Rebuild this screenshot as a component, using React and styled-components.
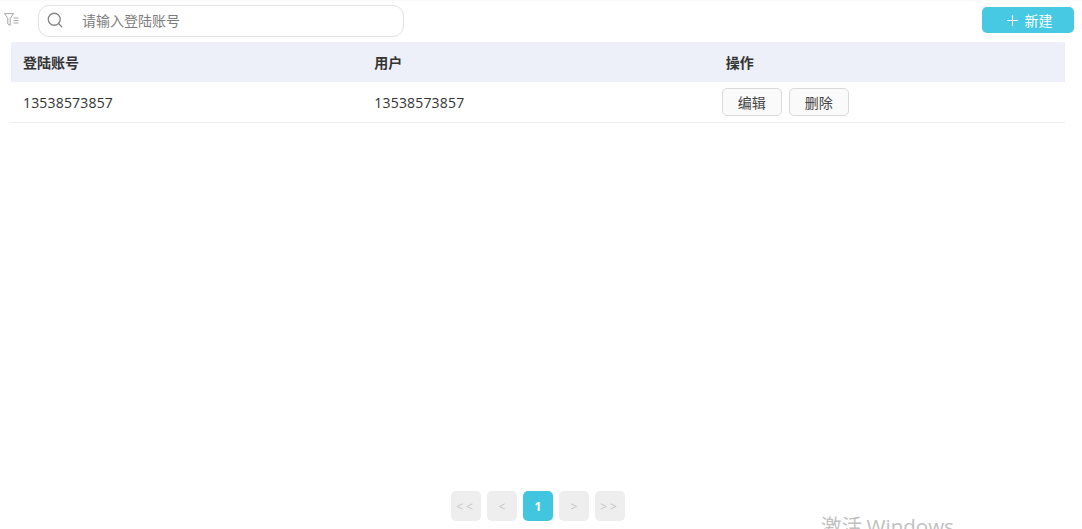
import React from "react";
import styled, { createGlobalStyle } from "styled-components";
import { Search, Plus } from "lucide-react";

const Global = createGlobalStyle`
  html, body { margin: 0; padding: 0; background: #fff; height: 100%; overflow: hidden; }
  body { font-family: "Open Sans", "Noto Sans CJK SC", sans-serif; color: #333; }
  #root { height: 100%; }
`;

const Page = styled.div`
  position: relative;
  height: 529px;
  display: flex;
  flex-direction: column;
  overflow: hidden;
  border-top: 1px solid #fafafa;
  box-sizing: border-box;
`;

const Toolbar = styled.div`
  height: 41px;
  flex: none;
  display: flex;
  align-items: center;
  padding: 0 8px 0 4px;
`;

const FilterIcon = styled.svg`
  width: 15px;
  height: 13px;
  flex: none;
  margin: -4px 19px 0 0;
  color: #a6a6a6;
`;

const SearchBox = styled.label`
  width: 366px;
  height: 32px;
  box-sizing: border-box;
  margin-top: -1px;
  display: flex;
  align-items: center;
  gap: 18px;
  padding-left: 7px;
  border: 1px solid #e2e2e2;
  border-radius: 11px;
  color: #858585;
`;

const SearchGlyph = styled(Search)`
  margin-top: -3px;
  flex: none;
`;

const SearchInput = styled.input`
  flex: 1;
  min-width: 0;
  padding: 0;
  margin-top: -2px;
  border: 0;
  outline: 0;
  background: transparent;
  font: 14px "Noto Sans CJK SC", sans-serif;
  color: #333;
  &::placeholder { color: #7d7d7d; opacity: 1; }
`;

const CreateButton = styled.button`
  margin-left: auto;
  margin-top: -3px;
  width: 92px;
  height: 26px;
  display: flex;
  align-items: center;
  justify-content: center;
  gap: 4px;
  padding: 0;
  border: 0;
  border-radius: 5px;
  background: #47c9e3;
  color: #fff;
  font: 14px "Noto Sans CJK SC", sans-serif;
`;

const Table = styled.table`
  flex: none;
  width: 1054px;
  margin-left: 11px;
  border-collapse: collapse;
  table-layout: fixed;
`;

const HeadCell = styled.th`
  height: 40px;
  padding: 0 12px;
  background: #edf0f8;
  text-align: left;
  font: 700 14px/20px "Noto Sans CJK SC", sans-serif;
  color: #333;
`;

const Cell = styled.td`
  height: 40px;
  padding: 0 12px;
  border-bottom: 1px solid #ededf3;
  font-size: 14px;
  letter-spacing: 0.18px;
  color: #333;
`;

const ActionCell = styled(Cell)`
  padding-left: 8px;
  letter-spacing: 0;
`;

const Actions = styled.div`
  display: flex;
  gap: 7px;
`;

const ActionButton = styled.button`
  width: 60px;
  height: 28px;
  padding: 0 0 1px;
  border: 1px solid #d9d9d9;
  border-radius: 5px;
  background: #fafafa;
  color: #444;
  font: 14px "Noto Sans CJK SC", sans-serif;
`;

const Pager = styled.nav`
  margin: auto 0 8px 0;
  width: 1076px;
  display: flex;
  justify-content: center;
  gap: 6px;
`;

const PageButton = styled.button`
  width: 30px;
  height: 30px;
  padding: 0;
  border: 0;
  border-radius: 5px;
  background: ${(p) => (p.$active ? "#42c6e0" : "#eeeeee")};
  color: ${(p) => (p.$active ? "#fff" : "#c6c6c6")};
  font: ${(p) => (p.$active ? "700" : "400")} 12px "Open Sans", sans-serif;
  letter-spacing: ${(p) => (p.$wide ? "3px" : "0")};
`;

const Watermark = styled.div`
  position: absolute;
  left: 821px;
  top: 510px;
  font: 20.5px "Noto Sans CJK SC", sans-serif;
  line-height: 28px;
  color: #c0c0c0;
  white-space: nowrap;
  pointer-events: none;
`;

const WatermarkLatin = styled.span`
  font-family: "Open Sans", sans-serif;
`;

const pages = [
  { label: "<<", wide: true },
  { label: "<" },
  { label: "1", active: true },
  { label: ">" },
  { label: ">>", wide: true },
];

export default function App() {
  return (
    <Page>
      <Global />
      <Toolbar>
        <FilterIcon viewBox="0 0 15 13" fill="none" stroke="currentColor" strokeWidth="1">
          <path d="M.5.6h9L6.2 5.4v7L3.8 11V5.4z" />
          <path d="M9.5 5h5M9.5 7.5h5M9.5 10h5" />
        </FilterIcon>
        <SearchBox>
          <SearchGlyph size={18} strokeWidth={1.7} />
          <SearchInput placeholder="请输入登陆账号" />
        </SearchBox>
        <CreateButton>
          <Plus size={17} strokeWidth={1.5} />
          新建
        </CreateButton>
      </Toolbar>
      <Table>
        <thead>
          <tr>
            <HeadCell>登陆账号</HeadCell>
            <HeadCell>用户</HeadCell>
            <HeadCell>操作</HeadCell>
          </tr>
        </thead>
        <tbody>
          <tr>
            <Cell>13538573857</Cell>
            <Cell>13538573857</Cell>
            <ActionCell>
              <Actions>
                <ActionButton>编辑</ActionButton>
                <ActionButton>删除</ActionButton>
              </Actions>
            </ActionCell>
          </tr>
        </tbody>
      </Table>
      <Pager>
        {pages.map((p) => (
          <PageButton key={p.label} $active={p.active} $wide={p.wide}>
            {p.label}
          </PageButton>
        ))}
      </Pager>
      <Watermark>
        激活 <WatermarkLatin>Windows</WatermarkLatin>
      </Watermark>
    </Page>
  );
}
